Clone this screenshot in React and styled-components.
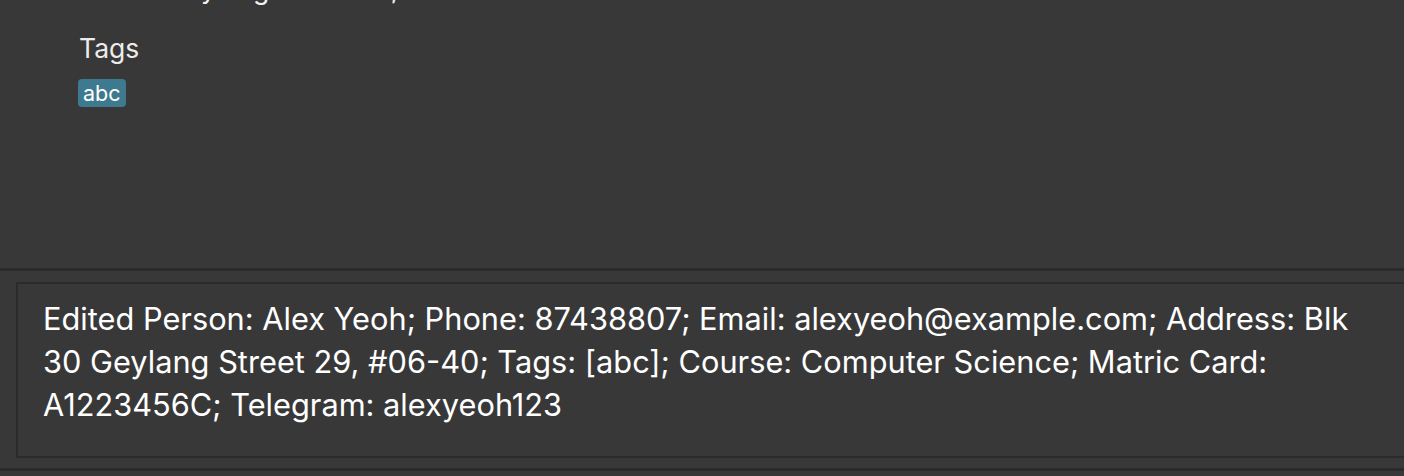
import React from 'react';
import styled, { createGlobalStyle } from 'styled-components';

const GlobalStyle = createGlobalStyle`
  html, body {
    margin: 0;
    padding: 0;
    background: #383838;
  }
  body {
    font-family: Inter, "Noto Sans", "Liberation Sans", sans-serif;
    overflow: hidden;
  }
`;

const Window = styled.div`
  width: 1404px;
  height: 476px;
  display: flex;
  flex-direction: column;
  background: #383838;
  overflow: hidden;
`;

const DetailPanel = styled.div`
  height: 268px;
  overflow: hidden;
  flex-shrink: 0;
`;

const DetailContent = styled.div`
  margin-top: -27px;
  padding-left: 80px;
  display: flex;
  flex-direction: column;
  align-items: flex-start;
`;

const FieldValue = styled.div`
  color: #f2f2f2;
  font-size: 26.5px;
  line-height: 32px;
`;

const FieldLabel = styled.div`
  color: #ececec;
  font-size: 26.5px;
  line-height: 32px;
  margin-top: 27px;
  margin-left: -1px;
`;

const TagRow = styled.div`
  display: flex;
  gap: 6px;
  margin-top: 15px;
  margin-left: -2px;
`;

const Tag = styled.span`
  display: inline-flex;
  align-items: center;
  box-sizing: border-box;
  background: #3e7a8f;
  color: #ffffff;
  font-size: 21.5px;
  height: 28px;
  padding: 0 5px 1px 5px;
  border-radius: 4px;
`;

const Divider = styled.div`
  height: 3px;
  background: #2a2a2a;
  flex-shrink: 0;
`;

const ResultArea = styled.div`
  padding: 11px 0 0 16px;
  height: 197px;
  box-sizing: border-box;
  flex-shrink: 0;
  overflow: hidden;
`;

const ResultBox = styled.div`
  width: 1420px;
  height: 176px;
  border: 2px solid #2b2b2b;
  padding: 13px 25px 0 25px;
  box-sizing: border-box;
  color: #ffffff;
  font-size: 30.75px;
  line-height: 43px;
`;

const ResultText = styled.div`
  width: 1328px;
`;

const BottomBar = styled.div`
  height: 3px;
  background: #2a2a2a;
  flex-shrink: 0;
`;

export default function App() {
  return (
    <>
      <GlobalStyle />
      <Window>
        <DetailPanel>
          <DetailContent>
            <FieldValue>Blk 30 Geylang Street 29, #06-40</FieldValue>
            <FieldLabel>Tags</FieldLabel>
            <TagRow>
              <Tag>abc</Tag>
            </TagRow>
          </DetailContent>
        </DetailPanel>
        <Divider />
        <ResultArea>
          <ResultBox>
            <ResultText>
              Edited Person: Alex Yeoh; Phone: 87438807; Email: alexyeoh@example.com; Address: Blk 30 Geylang Street 29, #06-40; Tags: [abc]; Course: Computer Science; Matric Card: A1223456C; Telegram: alexyeoh123
            </ResultText>
          </ResultBox>
        </ResultArea>
        <BottomBar />
      </Window>
    </>
  );
}
